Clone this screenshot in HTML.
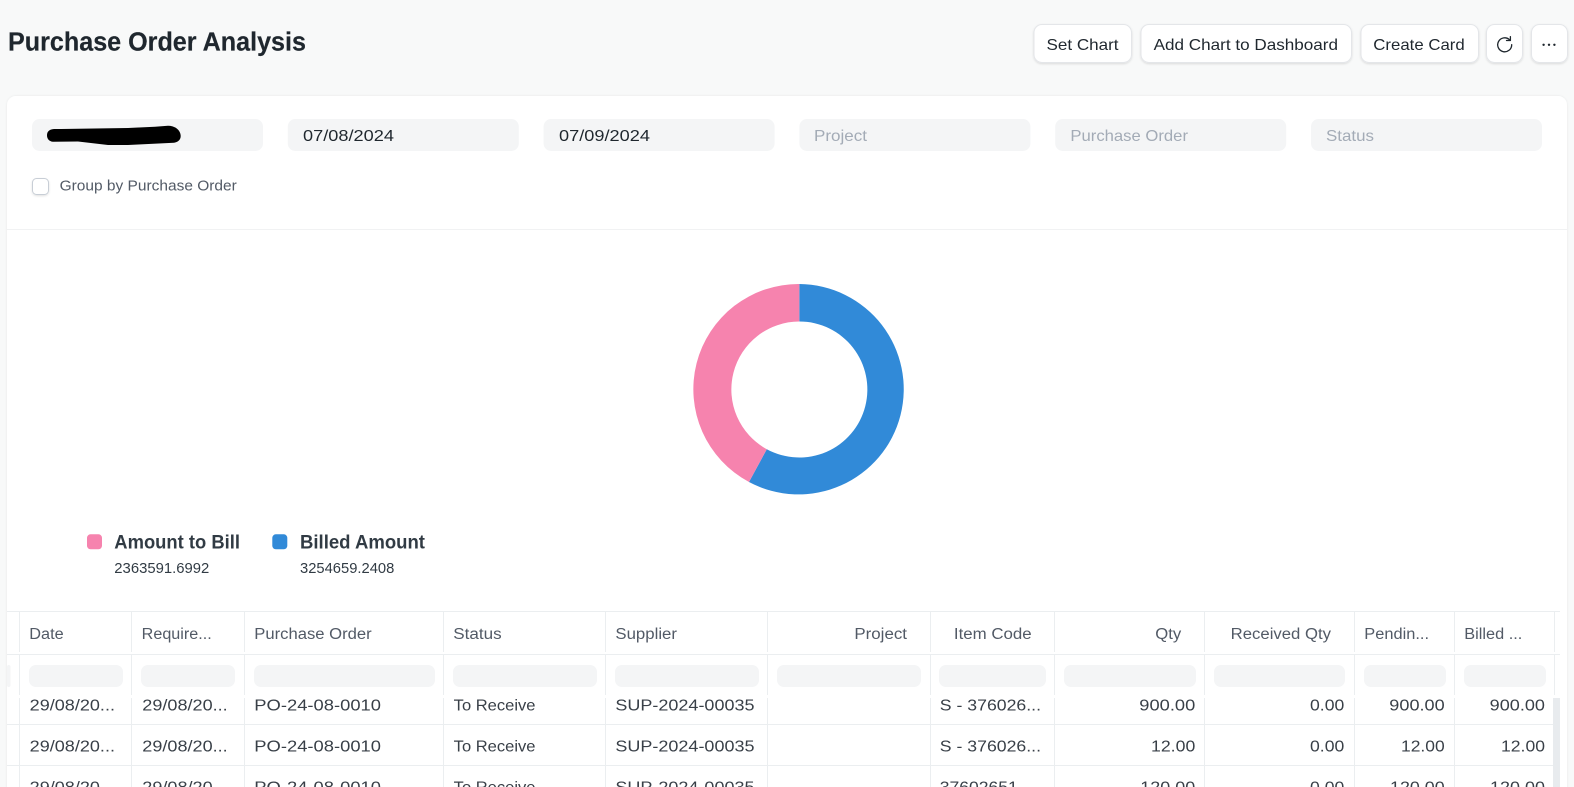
<!DOCTYPE html>
<html lang="en"><head><meta charset="utf-8"><title>Purchase Order Analysis</title>
<style>
html,body{margin:0;padding:0;width:1574px;height:787px;overflow:hidden;background:#f8f9f9}
svg{display:block}
text{font-family:"Liberation Sans",sans-serif}
</style></head><body>
<svg width="1574" height="787" viewBox="0 0 1574 787" xmlns="http://www.w3.org/2000/svg">
<defs>
<filter id="s" x="-20%" y="-20%" width="140%" height="150%"><feDropShadow dx="0" dy="1" stdDeviation="1" flood-color="#000" flood-opacity=".12"/></filter>
<filter id="c" x="-5%" y="-5%" width="110%" height="110%"><feDropShadow dx="0" dy="0" stdDeviation="1" flood-color="#000" flood-opacity=".08"/></filter>
<clipPath id="data"><rect x="7" y="698" width="1553" height="89"/></clipPath>
</defs>
<rect width="1574" height="787" fill="#f8f9f9"/>
<rect x="7" y="96" width="1560" height="720" rx="9" fill="#fff" filter="url(#c)"/>

<text x="8" y="50.7" font-size="25.500" font-weight="700" fill="#1f272e" stroke="#1f272e" stroke-width=".2" textLength="298" lengthAdjust="spacingAndGlyphs">Purchase Order Analysis</text>

<g fill="#fff" stroke="#e4e6e9" stroke-width="1" filter="url(#s)">
<rect x="1034" y="24.500" width="97.500" height="38" rx="8"/>
<rect x="1141" y="24.500" width="210.500" height="38" rx="8"/>
<rect x="1361" y="24.500" width="117.500" height="38" rx="8"/>
<rect x="1486.500" y="24.500" width="36" height="38" rx="8"/>
<rect x="1531.500" y="24.500" width="36" height="38" rx="8"/>
</g>
<g font-size="16" fill="#1f272e">
<text x="1046.500" y="50" textLength="72" lengthAdjust="spacingAndGlyphs">Set Chart</text>
<text x="1153.600" y="50" textLength="184.400" lengthAdjust="spacingAndGlyphs">Add Chart to Dashboard</text>
<text x="1373.300" y="50" textLength="91.400" lengthAdjust="spacingAndGlyphs">Create Card</text>
</g>
<path d="M1509.600 39.800A7 7 0 1 0 1511.700 44.700" fill="none" stroke="#1f272e" stroke-width="1.300" stroke-linecap="round"/>
<path d="M1510.400 36.600V40.500H1506.500" fill="none" stroke="#1f272e" stroke-width="1.300" stroke-linecap="round" stroke-linejoin="round"/>
<g fill="#1f272e"><circle cx="1543.600" cy="44.800" r="1.200"/><circle cx="1549" cy="44.800" r="1.200"/><circle cx="1554.400" cy="44.800" r="1.200"/></g>

<g fill="#f4f5f6">
<rect x="32" y="119" width="231" height="32" rx="7.500"/>
<rect x="287.800" y="119" width="231" height="32" rx="7.500"/>
<rect x="543.600" y="119" width="231" height="32" rx="7.500"/>
<rect x="799.400" y="119" width="231" height="32" rx="7.500"/>
<rect x="1055.200" y="119" width="231" height="32" rx="7.500"/>
<rect x="1311" y="119" width="231" height="32" rx="7.500"/>
</g>
<path d="M47 135.500C47 131.500 49 129.500 54 129L61 129L128 128L155 126.700L168 125.700C176 125.700 180.700 131 180.700 136C180.700 140.500 177 142.300 174 142.800L128 145L108 145L78 141.500L53 141.800C49.500 141.500 47 139 47 135.500Z" fill="#000"/>
<g font-size="16" fill="#1f272e">
<text x="303" y="141.200" textLength="91" lengthAdjust="spacingAndGlyphs">07/08/2024</text>
<text x="559" y="141.200" textLength="91" lengthAdjust="spacingAndGlyphs">07/09/2024</text>
</g>
<g font-size="16" fill="#a3abb6">
<text x="814" y="141.200" textLength="53" lengthAdjust="spacingAndGlyphs">Project</text>
<text x="1070.400" y="141.200" textLength="117.600" lengthAdjust="spacingAndGlyphs">Purchase Order</text>
<text x="1326" y="141.200" textLength="48" lengthAdjust="spacingAndGlyphs">Status</text>
</g>
<rect x="32.500" y="178.500" width="16" height="16" rx="4" fill="#fff" stroke="#c8ced6" filter="url(#s)"/>
<text x="59.600" y="190.700" font-size="15" fill="#525a66" textLength="177.200" lengthAdjust="spacingAndGlyphs">Group by Purchase Order</text>
<rect x="7" y="229" width="1560" height="1" fill="#f1f2f3"/>

<path d="M799.300 284A105.200 105.200 0 1 1 749 482L766.800 449.200A68 68 0 1 0 799.300 321.500Z" fill="#318ad8"/>
<path d="M749 482A105.200 105.200 0 0 1 799.300 284L799.300 321.500A68 68 0 0 0 766.800 449.200Z" fill="#f683ae"/>

<rect x="87" y="534.300" width="15" height="15" rx="3.500" fill="#f683ae"/>
<rect x="272.300" y="534.300" width="15" height="15" rx="3.500" fill="#318ad8"/>
<g font-size="19" font-weight="700" fill="#313b44">
<text x="114.300" y="548.700" textLength="125.700" lengthAdjust="spacingAndGlyphs">Amount to Bill</text>
<text x="300" y="548.700" textLength="125" lengthAdjust="spacingAndGlyphs">Billed Amount</text>
</g>
<g font-size="14.500" fill="#313b44">
<text x="114.300" y="573" textLength="95" lengthAdjust="spacingAndGlyphs">2363591.6992</text>
<text x="300" y="573" textLength="94.300" lengthAdjust="spacingAndGlyphs">3254659.2408</text>
</g>

<rect x="7" y="611" width="1553" height="1" fill="#ebeef0"/>
<rect x="7" y="654" width="1553" height="1" fill="#ebeef0"/>
<g fill="#ebeef0">
<rect x="7" y="724" width="1546" height="1"/>
<rect x="7" y="765" width="1546" height="1"/>
</g>
<g stroke="#ebeef0" stroke-width="1" fill="none">
<path d="M19.500 612V652M19.500 655V695M19.500 698V787"/>
<path d="M131.500 612V652M131.500 655V695M131.500 698V787"/>
<path d="M244.500 612V652M244.500 655V695M244.500 698V787"/>
<path d="M443.500 612V652M443.500 655V695M443.500 698V787"/>
<path d="M605.500 612V652M605.500 655V695M605.500 698V787"/>
<path d="M767.500 612V652M767.500 655V695M767.500 698V787"/>
<path d="M930.500 612V652M930.500 655V695M930.500 698V787"/>
<path d="M1054.500 612V652M1054.500 655V695M1054.500 698V787"/>
<path d="M1204.500 612V652M1204.500 655V695M1204.500 698V787"/>
<path d="M1354.500 612V652M1354.500 655V695M1354.500 698V787"/>
<path d="M1454.500 612V652M1454.500 655V695M1454.500 698V787"/>
<path d="M1554.500 612V652M1554.500 655V695"/>
</g>
<rect x="1553" y="698" width="7" height="89" fill="#e8ebee"/>

<g font-size="15.500" fill="#525a66">
<text x="29.300" y="639" textLength="34.400" lengthAdjust="spacingAndGlyphs">Date</text>
<text x="141.700" y="639" textLength="70" lengthAdjust="spacingAndGlyphs">Require...</text>
<text x="254.300" y="639" textLength="117.400" lengthAdjust="spacingAndGlyphs">Purchase Order</text>
<text x="453.300" y="639" textLength="48.400" lengthAdjust="spacingAndGlyphs">Status</text>
<text x="615.400" y="639" textLength="61.600" lengthAdjust="spacingAndGlyphs">Supplier</text>
<text x="854.400" y="639" textLength="52.600" lengthAdjust="spacingAndGlyphs">Project</text>
<text x="953.900" y="639" textLength="77.800" lengthAdjust="spacingAndGlyphs">Item Code</text>
<text x="1155.300" y="639" textLength="26" lengthAdjust="spacingAndGlyphs">Qty</text>
<text x="1230.700" y="639" textLength="100.300" lengthAdjust="spacingAndGlyphs">Received Qty</text>
<text x="1364.300" y="639" textLength="64.700" lengthAdjust="spacingAndGlyphs">Pendin...</text>
<text x="1464.300" y="639" textLength="58" lengthAdjust="spacingAndGlyphs">Billed ...</text>
</g>

<g fill="#f4f5f6">
<rect x="7" y="665" width="3.500" height="22" rx="2"/>
<rect x="29" y="665" width="94" height="22" rx="7"/>
<rect x="141" y="665" width="94" height="22" rx="7"/>
<rect x="254" y="665" width="181" height="22" rx="7"/>
<rect x="453" y="665" width="144" height="22" rx="7"/>
<rect x="615" y="665" width="144" height="22" rx="7"/>
<rect x="777" y="665" width="144" height="22" rx="7"/>
<rect x="939" y="665" width="107" height="22" rx="7"/>
<rect x="1064" y="665" width="132" height="22" rx="7"/>
<rect x="1214" y="665" width="131" height="22" rx="7"/>
<rect x="1364" y="665" width="82" height="22" rx="7"/>
<rect x="1464" y="665" width="82" height="22" rx="7"/>
</g>

<g font-size="16" fill="#383f47" clip-path="url(#data)">
<g>
<text x="29.700" y="710.700" textLength="85.300" lengthAdjust="spacingAndGlyphs">29/08/20...</text>
<text x="142.300" y="710.700" textLength="85.400" lengthAdjust="spacingAndGlyphs">29/08/20...</text>
<text x="254.300" y="710.700" textLength="126.700" lengthAdjust="spacingAndGlyphs">PO-24-08-0010</text>
<text x="453.700" y="710.700" textLength="81.800" lengthAdjust="spacingAndGlyphs">To Receive</text>
<text x="615.400" y="710.700" textLength="139.100" lengthAdjust="spacingAndGlyphs">SUP-2024-00035</text>
<text x="939.800" y="710.700" textLength="101.200" lengthAdjust="spacingAndGlyphs">S - 376026...</text>
<text x="1139.300" y="710.700" textLength="56" lengthAdjust="spacingAndGlyphs">900.00</text>
<text x="1310" y="710.700" textLength="34.300" lengthAdjust="spacingAndGlyphs">0.00</text>
<text x="1389.300" y="710.700" textLength="55.400" lengthAdjust="spacingAndGlyphs">900.00</text>
<text x="1489.700" y="710.700" textLength="55.300" lengthAdjust="spacingAndGlyphs">900.00</text>
</g>
<g>
<text x="29.700" y="751.700" textLength="85.300" lengthAdjust="spacingAndGlyphs">29/08/20...</text>
<text x="142.300" y="751.700" textLength="85.400" lengthAdjust="spacingAndGlyphs">29/08/20...</text>
<text x="254.300" y="751.700" textLength="126.700" lengthAdjust="spacingAndGlyphs">PO-24-08-0010</text>
<text x="453.700" y="751.700" textLength="81.800" lengthAdjust="spacingAndGlyphs">To Receive</text>
<text x="615.400" y="751.700" textLength="139.100" lengthAdjust="spacingAndGlyphs">SUP-2024-00035</text>
<text x="939.800" y="751.700" textLength="101.200" lengthAdjust="spacingAndGlyphs">S - 376026...</text>
<text x="1151" y="751.700" textLength="44.300" lengthAdjust="spacingAndGlyphs">12.00</text>
<text x="1310" y="751.700" textLength="34.300" lengthAdjust="spacingAndGlyphs">0.00</text>
<text x="1401" y="751.700" textLength="43.700" lengthAdjust="spacingAndGlyphs">12.00</text>
<text x="1501" y="751.700" textLength="44" lengthAdjust="spacingAndGlyphs">12.00</text>
</g>
<g>
<text x="29.700" y="792.700" textLength="85.300" lengthAdjust="spacingAndGlyphs">29/08/20...</text>
<text x="142.300" y="792.700" textLength="85.400" lengthAdjust="spacingAndGlyphs">29/08/20...</text>
<text x="254.300" y="792.700" textLength="126.700" lengthAdjust="spacingAndGlyphs">PO-24-08-0010</text>
<text x="453.700" y="792.700" textLength="81.800" lengthAdjust="spacingAndGlyphs">To Receive</text>
<text x="615.400" y="792.700" textLength="139.100" lengthAdjust="spacingAndGlyphs">SUP-2024-00035</text>
<text x="939.800" y="792.700" textLength="78" lengthAdjust="spacingAndGlyphs">37602651</text>
<text x="1140.300" y="792.700" textLength="55" lengthAdjust="spacingAndGlyphs">120.00</text>
<text x="1310" y="792.700" textLength="34.300" lengthAdjust="spacingAndGlyphs">0.00</text>
<text x="1390" y="792.700" textLength="54.700" lengthAdjust="spacingAndGlyphs">120.00</text>
<text x="1490" y="792.700" textLength="55" lengthAdjust="spacingAndGlyphs">120.00</text>
</g>
</g>
</svg>
</body></html>
